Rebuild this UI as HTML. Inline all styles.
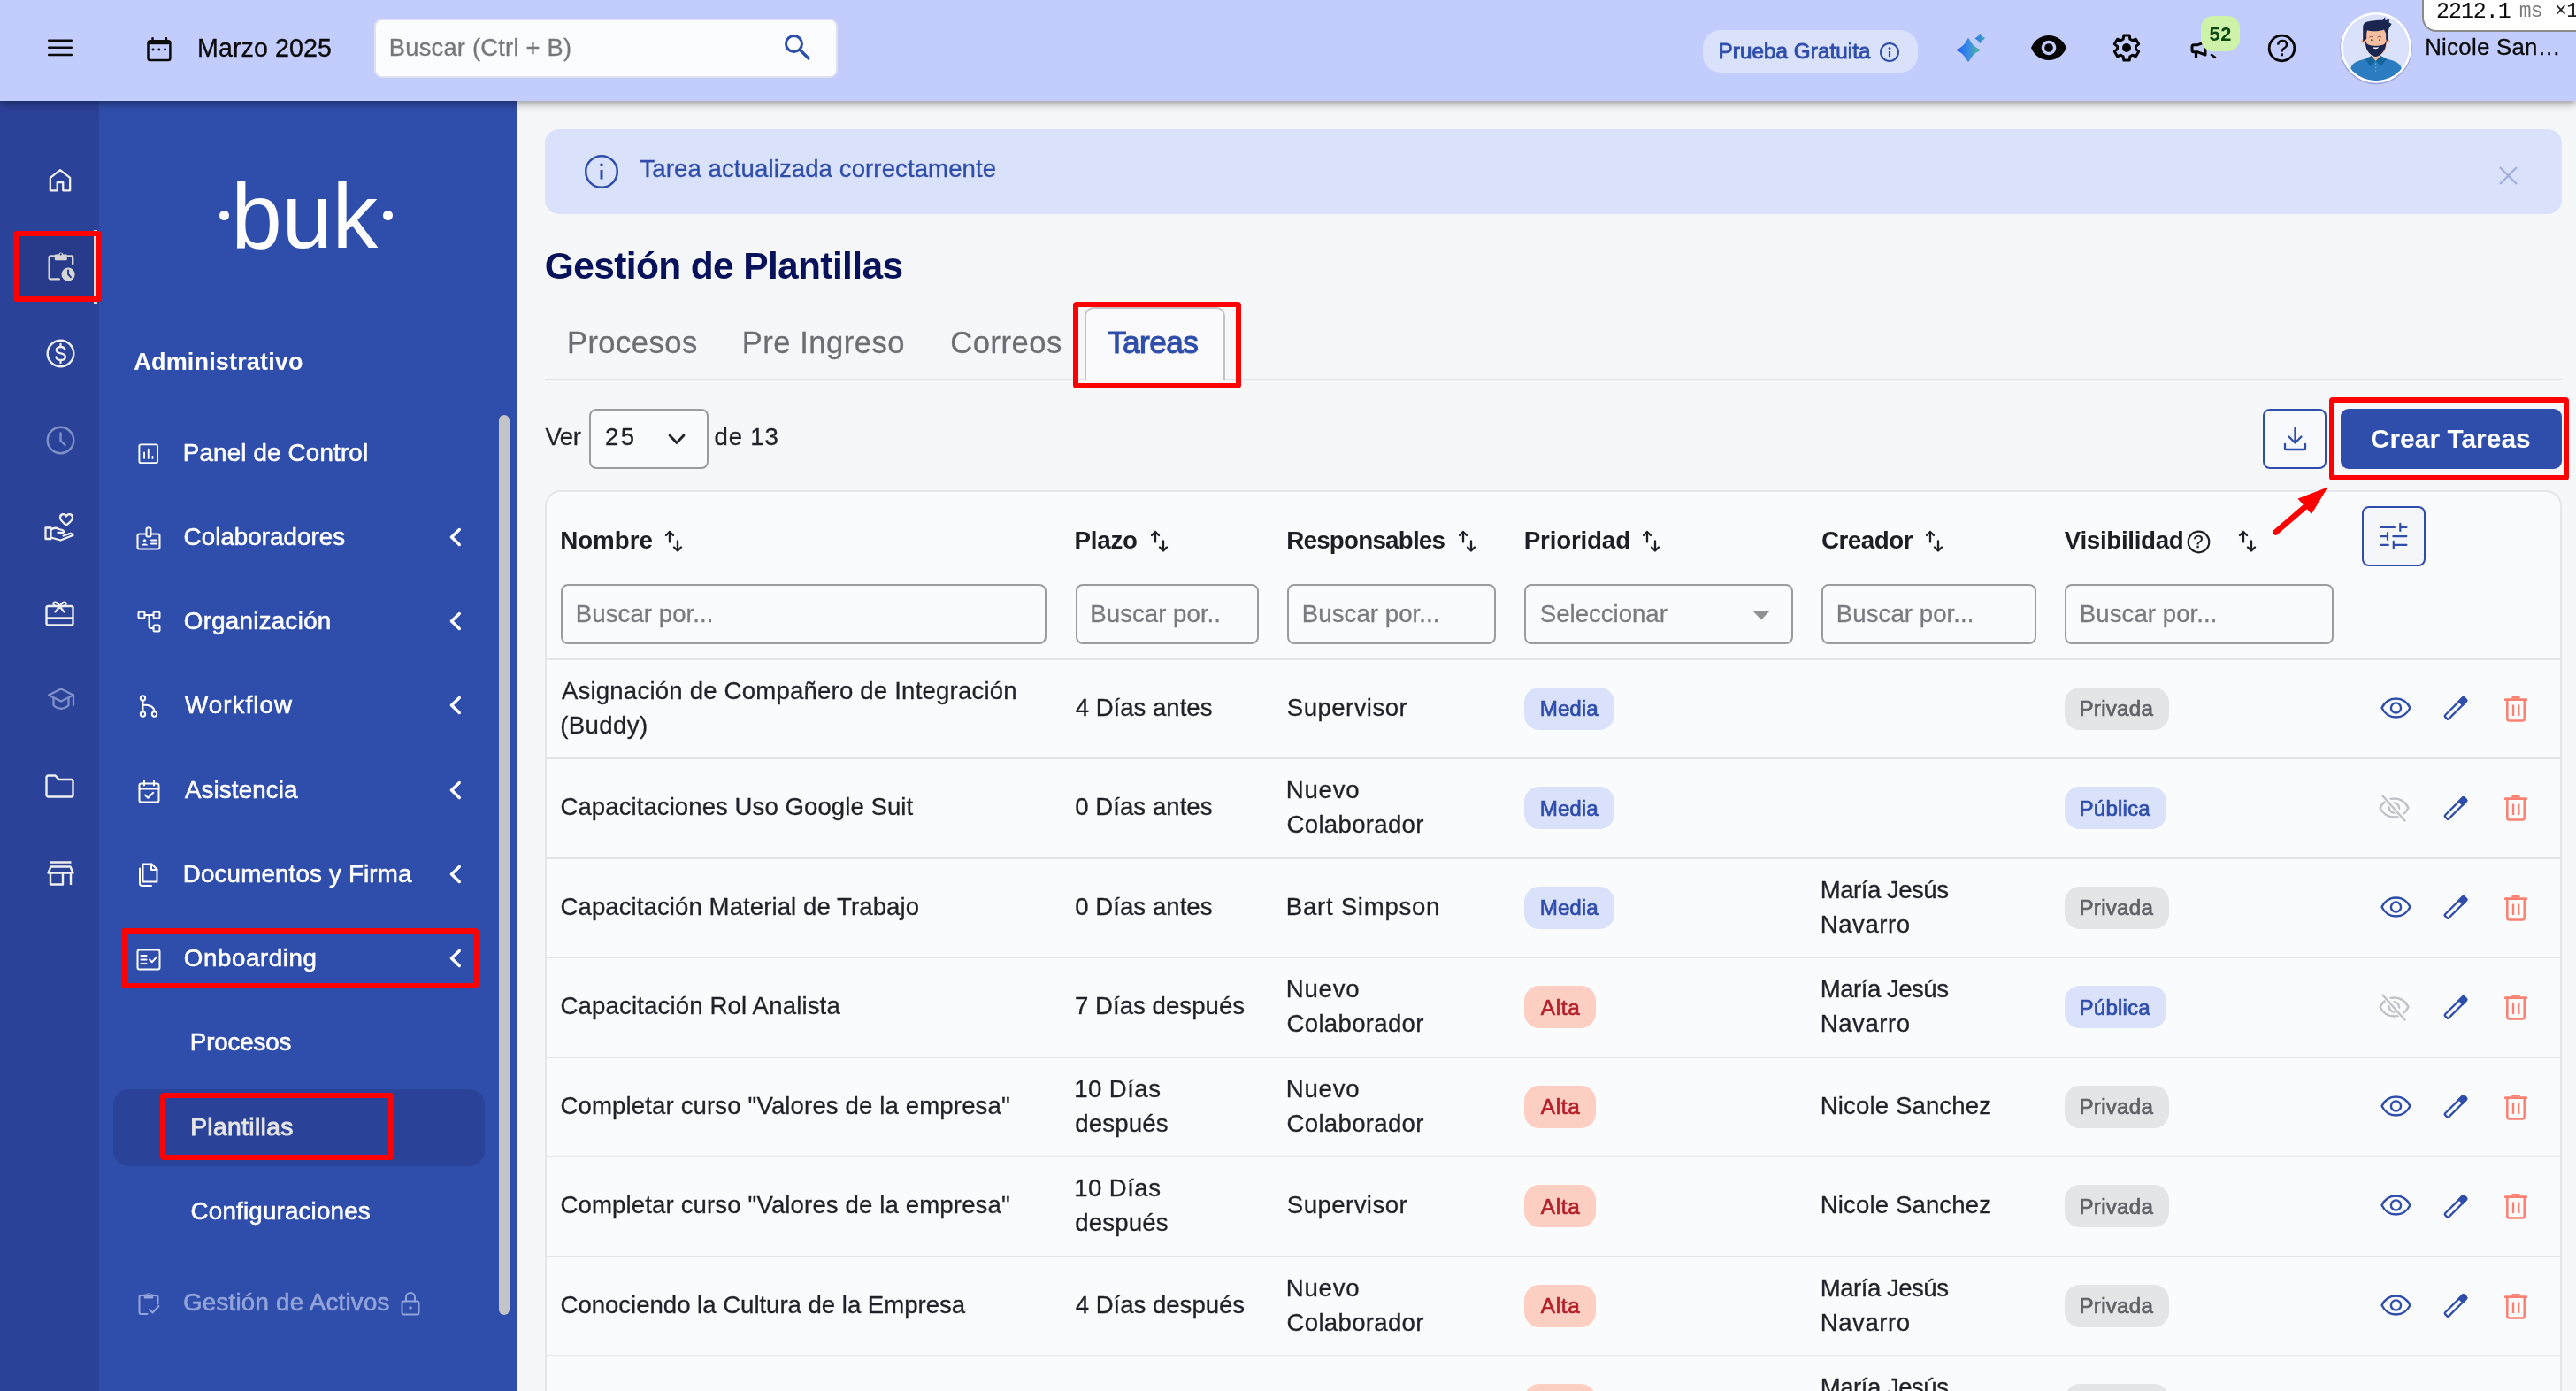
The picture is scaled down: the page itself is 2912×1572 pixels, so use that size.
<!DOCTYPE html>
<html lang="es"><head><meta charset="utf-8"><title>Gestión de Plantillas</title>
<style>
html,body{margin:0;padding:0}
body{width:2912px;height:1572px;overflow:hidden;position:relative;background:#f6f7f9;font-family:"Liberation Sans",sans-serif;}
#app{position:absolute;left:0;top:0;width:2912px;height:1572px;overflow:hidden;will-change:transform}
@media (width:1456px){body{width:1456px;height:786px}#app{transform:scale(.5);transform-origin:0 0}}
.t{position:absolute;white-space:nowrap;line-height:1em;margin:0;padding:0;font-weight:400}
.red{position:absolute;border:6px solid #fe0000;border-radius:4px;box-sizing:border-box}
.inp{position:absolute;box-sizing:border-box;border:2px solid #9a9c9f;border-radius:8px;background:#fafbfd}
.line{position:absolute;background:#e2e5ea;height:2px}
.bdg{position:absolute;border-radius:17px;box-sizing:border-box}
</style></head><body><div id="app">
<div style="position:absolute;left:0px;top:114px;width:112px;height:1458px;background:#2b4299;"></div>
<div style="position:absolute;left:112px;top:114px;width:472px;height:1458px;background:#2f4daa;"></div>
<div style="position:absolute;left:16px;top:262px;width:92px;height:78px;background:#283b8a;"></div>
<div style="position:absolute;left:106px;top:260px;width:3.5px;height:82.5px;background:#d9d9d9;"></div>
<div style="position:absolute;left:564px;top:469px;width:12px;height:1017px;background:#c3c4c8;border-radius:6px;"></div>
<div style="position:absolute;left:128px;top:1231px;width:420px;height:87px;background:#2b4299;border-radius:18px;"></div>
<div style="position:absolute;left:0px;top:0px;width:2912px;height:114px;background:#c3cdfd;box-shadow:0 3px 9px rgba(0,0,0,.40);"></div>
<svg style="position:absolute;left:50.0px;top:40.0px;" width="40.0" height="28.0" viewBox="50 40 40 28" fill="none"><path d="M55.200 45.700h25.600M55.200 53.800h25.600M55.200 61.900h25.600" stroke="#0b0b0b" stroke-width="2.500" stroke-linecap="round"/></svg>
<svg style="position:absolute;left:160.0px;top:38.0px;" width="40.0" height="36.0" viewBox="160 38 40 36" fill="none"><rect x="167.500" y="46.200" width="24.900" height="21.800" rx="2.300" stroke="#0b0b0b" stroke-width="2.500"/><path d="M167.500 49.100h24.900" stroke="#0b0b0b" stroke-width="2.200"/><path d="M172.500 43.300v2.500M187.900 43.300v2.500" stroke="#0b0b0b" stroke-width="2.500" stroke-linecap="round"/><circle cx="173" cy="56" r="1.450" fill="#0b0b0b"/><circle cx="179.800" cy="56" r="1.450" fill="#0b0b0b"/><circle cx="186.500" cy="56" r="1.450" fill="#0b0b0b"/></svg>
<span class="t" style="left:223.0px;top:40.1px;font-size:28.6px;color:#0b0b0b;-webkit-text-stroke:0.35px #0b0b0b;letter-spacing:0.11px;">Marzo 2025</span>
<div style="position:absolute;left:423px;top:20.5px;width:524px;height:67px;box-sizing:border-box;background:#fbfcfe;border:2px solid #dfe2ea;border-radius:9px;"></div>
<span class="t" style="left:439.8px;top:40.3px;font-size:27.3px;color:#75777b;-webkit-text-stroke:0.3px #75777b;letter-spacing:0.24px;">Buscar (Ctrl + B)</span>
<svg style="position:absolute;left:885.0px;top:37.0px;" width="32.0" height="32.0" viewBox="0 0 32 32" fill="none"><circle cx="12.5" cy="12.5" r="9" stroke="#2f4daa" stroke-width="3"/><path d="M19.5 19.5L29 29" stroke="#2f4daa" stroke-width="3.2" stroke-linecap="round"/></svg>
<div style="position:absolute;left:1925px;top:34px;width:243px;height:48px;background:#dae1fb;border-radius:20px;"></div>
<span class="t" style="left:1942.6px;top:45.7px;font-size:24.2px;color:#2f4daa;-webkit-text-stroke:0.9px #2f4daa;letter-spacing:0.08px;">Prueba Gratuita</span>
<svg style="position:absolute;left:2124.0px;top:46.5px;" width="24.0" height="24.0" viewBox="0 0 24 24" fill="none"><circle cx="12" cy="12" r="10" stroke="#2f4daa" stroke-width="2"/><path d="M12 11v6" stroke="#2f4daa" stroke-width="2.2"/><circle cx="12" cy="7.6" r="1.4" fill="#2f4daa"/></svg>
<svg style="position:absolute;left:2206.0px;top:30.0px;" width="44.0" height="44.0" viewBox="2206 30 44 44" fill="none"><defs><linearGradient id="sg" gradientUnits="userSpaceOnUse" x1="2212" y1="0" x2="2240" y2="0"><stop offset="0" stop-color="#1a64f7"/><stop offset="0.5" stop-color="#3a8ee2"/><stop offset="1" stop-color="#55bd84"/></linearGradient><linearGradient id="sg2" gradientUnits="userSpaceOnUse" x1="2232" y1="0" x2="2245" y2="0"><stop offset="0" stop-color="#2a78f0"/><stop offset="1" stop-color="#4aa9b0"/></linearGradient></defs><path d="M2225.10 44.30C2227.54 49.91 2231.69 54.06 2237.30 56.50C2231.69 58.94 2227.54 63.09 2225.10 68.70C2222.66 63.09 2218.51 58.94 2212.90 56.50C2218.51 54.06 2222.66 49.91 2225.10 44.30Z" fill="url(#sg)" stroke="url(#sg)" stroke-width="2" stroke-linejoin="round"/><path d="M2238.30 38.50C2239.28 40.75 2240.95 42.42 2243.20 43.40C2240.95 44.38 2239.28 46.05 2238.30 48.30C2237.32 46.05 2235.65 44.38 2233.40 43.40C2235.65 42.42 2237.32 40.75 2238.30 38.50Z" fill="url(#sg2)" stroke="url(#sg2)" stroke-width="1.200" stroke-linejoin="round"/></svg>
<svg style="position:absolute;left:2296.0px;top:40.0px;" width="40.0" height="28.0" viewBox="0 0 40 28" fill="none"><path d="M20 0C11 0 3.500 5.500 0 14c3.500 8.500 11 14 20 14s16.500-5.500 20-14C36.500 5.500 29 0 20 0z" fill="#050505"/><circle cx="20" cy="14" r="8.300" fill="#c3cdfd"/><circle cx="20" cy="14" r="4.800" fill="#050505"/></svg>
<svg style="position:absolute;left:2384.0px;top:34.0px;" width="40.0" height="40.0" viewBox="2384 34 40 40" fill="none"><path d="M2400.20 44.10L2400.78 40.07L2407.22 40.07L2407.80 44.10L2410.67 45.76L2414.46 44.25L2417.68 49.82L2414.47 52.34L2414.47 55.66L2417.68 58.18L2414.46 63.75L2410.67 62.24L2407.80 63.90L2407.22 67.93L2400.78 67.93L2400.20 63.90L2397.33 62.24L2393.54 63.75L2390.32 58.18L2393.53 55.66L2393.53 52.34L2390.32 49.82L2393.54 44.25L2397.33 45.76Z" stroke="#050505" stroke-width="3" stroke-linejoin="round"/><circle cx="2404" cy="54" r="5" fill="#050505"/></svg>
<svg style="position:absolute;left:2470.0px;top:40.0px;" width="40.0" height="30.0" viewBox="2470 40 40 30" fill="none"><path d="M2480 50.700h4.500l8.500-3.200v14.500l-8.500-3.200h-4.500a2 2 0 01-2-2v-4.100a2 2 0 012-2z" stroke="#050505" stroke-width="3" stroke-linejoin="round"/><path d="M2482.500 59v5.300" stroke="#050505" stroke-width="3.200" stroke-linecap="round"/><path d="M2500 62l4 2.800" stroke="#050505" stroke-width="2.600" stroke-linecap="round"/></svg>
<div style="position:absolute;left:2488px;top:18px;width:44px;height:40px;background:#cdf2a8;border-radius:14px;"></div>
<span class="t" style="left:2497.4px;top:27.5px;font-size:21.8px;color:#0b4a12;font-weight:700;letter-spacing:0.73px;">52</span>
<svg style="position:absolute;left:2563.0px;top:37.5px;" width="33.0" height="33.0" viewBox="0 0 33 33" fill="none"><circle cx="16.500" cy="16.500" r="14.300" stroke="#050505" stroke-width="2.800"/></svg>
<span class="t" style="left:2573.0px;top:41.7px;font-size:25.5px;color:#050505;-webkit-text-stroke:0.3px #050505;">?</span>
<svg style="position:absolute;left:2636.0px;top:4.0px;" width="100.0" height="100.0" viewBox="0 0 100 100" fill="none"><defs><clipPath id="avc"><circle cx="50" cy="49.800" r="37.400"/></clipPath></defs>
<circle cx="50" cy="50.600" r="40.800" fill="rgba(70,80,150,.30)"/>
<circle cx="50" cy="49.800" r="40" fill="#fff"/><circle cx="50" cy="49.800" r="37.400" fill="#dae1fa"/>
<g clip-path="url(#avc)">
<path d="M21 75C22 67.500 27 65.300 38.100 62.500L44.600 59.300 49.600 60.500 55.300 59.300 61.800 62.500C73 65.300 78 67.500 79.100 75L79 100H21z" fill="#2b7cc1"/>
<path d="M44.600 58L54.800 58 54.200 60.500 49.600 65.300 45.200 60.500z" fill="#f6b898"/>
<path d="M38.100 62.500L44.600 59.300 49.600 65.100 43.100 70.800zM61.800 62.500L55.300 59.300 49.600 65.100 55.700 70.800z" fill="#12649b"/>
<circle cx="49.600" cy="68.300" r=".700" fill="#c9a56a"/><circle cx="49.600" cy="72.500" r=".700" fill="#c9a56a"/><circle cx="49.600" cy="76" r=".700" fill="#c9a56a"/>
<circle cx="35.600" cy="42.400" r="2.400" fill="#f0ac8c"/><circle cx="63.200" cy="42.400" r="2.400" fill="#f0ac8c"/>
<path d="M38.800 28h22.700v20c0 7-5 11-11.300 11S38.800 55 38.800 48z" fill="#f8be9f"/>
<path d="M37.600 39.500C38 48 38.500 52 43.100 56.800 46 59.500 48 60 49.600 60s3.600-.500 6.500-3.200C60.700 52 61.400 48 61.900 39.500 61.200 43 60.500 45 58.800 46.300 56 47.500 53 47.800 49.600 47.800S43.500 47.500 40.800 46.300C39 45 38.300 43 37.600 39.500z" fill="#1a264f"/>
<path d="M46.200 49c2.200 .800 4.600 .800 6.800 0-.600 3-6.200 3-6.800 0z" fill="#fff"/>
<path d="M35.200 43.100V27C35.200 23 37.500 21 40.300 20.500 44 19.300 52 18.700 57.500 18.700L60 15.300 60.700 19.200 65 17.300 64.700 21.600 67.600 23 65 27.300C64 30 63.400 32.400 62.800 43.100L61.100 40V33.800L59 29.500C55 31.500 45 32 39.900 30.200L39.200 34V40z" fill="#1a264f"/>
<circle cx="44.900" cy="41.200" r=".900" fill="#2d5a66"/><circle cx="53.900" cy="41.200" r=".900" fill="#2d5a66"/>
<path d="M42.700 38c1.200-1 2.800-1 4 0M51.800 38c1.200-1 2.800-1 4 0" stroke="#3a2f3f" stroke-width=".700" stroke-linecap="round"/>
</g></svg>
<span class="t" style="left:2741.2px;top:41.4px;font-size:25.8px;color:#0b0b0b;-webkit-text-stroke:0.3px #0b0b0b;letter-spacing:0.28px;">Nicole San…</span>
<div style="position:absolute;left:2738px;top:-4px;width:190px;height:39.5px;box-sizing:border-box;background:#fff;border:2px solid #8b8b88;border-radius:0 0 0 16px;"></div>
<span class="t" style="left:2754.0px;top:0.5px;font-size:25px;color:#0d0d0d;letter-spacing:-1.05px;font-family:'Liberation Mono','DejaVu Sans Mono',monospace;">2212.1</span>
<span class="t" style="left:2847.7px;top:2.2px;font-size:23px;color:#7a7a7a;letter-spacing:-0.80px;font-family:'Liberation Mono','DejaVu Sans Mono',monospace;">ms</span>
<span class="t" style="left:2888.0px;top:2.2px;font-size:23px;color:#222;letter-spacing:-0.50px;font-family:'Liberation Mono','DejaVu Sans Mono',monospace;">×1</span>
<svg style="position:absolute;left:55.0px;top:189.8px;" width="26.0" height="27.5" viewBox="0 0 28 29" fill="none"><path d="M2 11.500L14 2l12 9.500V27h-8.500V17h-7v10H2z" stroke="#efefef" stroke-width="2.500" stroke-linejoin="round"/></svg>
<svg style="position:absolute;left:53.5px;top:283.5px;" width="32.0" height="34.0" viewBox="0 0 32 34" fill="none"><path d="M22.500 5.400h4.200a1.500 1.500 0 011.500 1.500v7M7.500 5.400H3.200a1.500 1.500 0 00-1.500 1.500v23a1.500 1.500 0 001.500 1.500h9.600" stroke="#d6d6d6" stroke-width="2.400" stroke-linecap="round"/><path d="M8.800 3.600h3.300a2.800 2.800 0 015.400 0h3.300a1 1 0 011 1v4.600a1 1 0 01-1 1H8.800a1 1 0 01-1-1V4.600a1 1 0 011-1z" fill="#d6d6d6"/><circle cx="14.800" cy="3.400" r="1.100" fill="#283b8a"/><circle cx="23.100" cy="26" r="7.600" fill="#d6d6d6"/><path d="M23.100 21.500V26l2.800 3.200" stroke="#283b8a" stroke-width="2" stroke-linecap="round"/></svg>
<svg style="position:absolute;left:51.5px;top:382.5px;" width="33.0" height="33.0" viewBox="0 0 33 33" fill="none"><circle cx="16.500" cy="16.500" r="14.800" stroke="#efefef" stroke-width="2.400"/><path d="M21.500 12.200c-.600-2-2.400-3.200-5-3.200-2.800 0-4.800 1.400-4.800 3.700 0 5 10.200 2.300 10.200 7.600 0 2.300-2.200 3.700-5.200 3.700-2.800 0-4.800-1.300-5.400-3.500M16.500 6v3M16.500 24v3" stroke="#efefef" stroke-width="2.300" stroke-linecap="round"/></svg>
<svg style="position:absolute;left:51.5px;top:480.5px;" width="33.0" height="33.0" viewBox="0 0 33 33" fill="none"><circle cx="16.500" cy="16.500" r="14.800" stroke="#8091c8" stroke-width="2.400"/><path d="M16.500 8.500v8.500l5 5" stroke="#8091c8" stroke-width="2.400" stroke-linecap="round"/></svg>
<svg style="position:absolute;left:50.1px;top:578.5px;" width="35.0" height="34.0" viewBox="0 0 35 34" fill="none"><path d="M1.500 17.500h6V30h-6z" stroke="#efefef" stroke-width="2.300" stroke-linejoin="round"/><path d="M7.500 19.500c3-2 6-2.500 9-.500l4 1c2 .500 2 3 0 3h-5M7.500 28.500l11 3 14-5.500c-1-2.500-3-2.500-5-1.500l-6 2" stroke="#efefef" stroke-width="2.300" stroke-linejoin="round" stroke-linecap="round"/><path d="M25 14.500c-4-3-7-5.500-7-8.500 0-4.500 5.500-5 7-1.500 1.500-3.500 7-3 7 1.500 0 3-3 5.500-7 8.500z" stroke="#efefef" stroke-width="2.300" stroke-linejoin="round"/></svg>
<svg style="position:absolute;left:51.3px;top:677.7px;" width="33.0" height="30.0" viewBox="0 0 33 30" fill="none"><rect x="1.500" y="7" width="30" height="21.500" rx="2" stroke="#efefef" stroke-width="2.400"/><path d="M1.500 20.500h30" stroke="#efefef" stroke-width="2.400"/><path d="M16.500 7.500c-3-6-8-6-7-2.500.700 2 4 2.500 7 2.500zM16.500 7.500c3-6 8-6 7-2.500-.700 2-4 2.500-7 2.500zM16.500 7.500l-5 6M16.500 7.500l5 6" stroke="#efefef" stroke-width="2.200" stroke-linejoin="round" stroke-linecap="round"/></svg>
<svg style="position:absolute;left:52.5px;top:776.0px;" width="33.0" height="28.0" viewBox="0 0 33 28" fill="none"><path d="M2 9.500L16 2.500l14 7-14 7z" stroke="#8091c8" stroke-width="2.300" stroke-linejoin="round"/><path d="M7.500 13v8c4.500 5 12.500 5 17 0v-8M30 9.500V21" stroke="#8091c8" stroke-width="2.300" stroke-linejoin="round" stroke-linecap="round"/></svg>
<svg style="position:absolute;left:51.3px;top:875.0px;" width="33.0" height="27.0" viewBox="0 0 33 27" fill="none"><path d="M1.500 3.500a2 2 0 012-2h8l4 4.500h14a2 2 0 012 2V23.500a2 2 0 01-2 2h-26a2 2 0 01-2-2z" stroke="#efefef" stroke-width="2.400" stroke-linejoin="round"/></svg>
<svg style="position:absolute;left:52.7px;top:972.7px;" width="31.0" height="28.0" viewBox="0 0 31 28" fill="none"><path d="M3.500 1.500h24" stroke="#efefef" stroke-width="2.500"/><path d="M4.500 6.500h22l3 7h-28z" stroke="#efefef" stroke-width="2.400" stroke-linejoin="round"/><path d="M4 13.500v13h14v-13M27 13.500v13.500" stroke="#efefef" stroke-width="2.400" stroke-linejoin="round"/></svg>
<div class="red" style="left:15px;top:261px;width:100px;height:80px"></div>
<div style="position:absolute;left:247.5px;top:238px;width:11px;height:11px;background:#fff;border-radius:50%;"></div>
<div style="position:absolute;left:433px;top:238px;width:11px;height:11px;background:#fff;border-radius:50%;"></div>
<span class="t" style="left:261.3px;top:193.4px;font-size:103.5px;color:#fff;letter-spacing:-0.45px;">buk</span>
<span class="t" style="left:151.3px;top:395.3px;font-size:27.1px;color:#fff;font-weight:700;letter-spacing:0.12px;">Administrativo</span>
<span class="t" style="left:206.8px;top:498.0px;font-size:27.7px;color:#fff;-webkit-text-stroke:0.6px #fff;letter-spacing:0.20px;">Panel de Control</span>
<span class="t" style="left:207.6px;top:593.0px;font-size:27.7px;color:#fff;-webkit-text-stroke:0.6px #fff;letter-spacing:0.08px;">Colaboradores</span>
<svg style="position:absolute;left:507.0px;top:595.9px;" width="15.0" height="22.0" viewBox="0 0 15 22" fill="none"><path d="M12.300 2.500L3.500 11 12.300 19.500" stroke="#fff" stroke-width="3.500" stroke-linecap="round" stroke-linejoin="round"/></svg>
<span class="t" style="left:207.8px;top:688.4px;font-size:27.7px;color:#fff;-webkit-text-stroke:0.6px #fff;letter-spacing:0.30px;">Organización</span>
<svg style="position:absolute;left:507.0px;top:691.3px;" width="15.0" height="22.0" viewBox="0 0 15 22" fill="none"><path d="M12.300 2.500L3.500 11 12.300 19.500" stroke="#fff" stroke-width="3.500" stroke-linecap="round" stroke-linejoin="round"/></svg>
<span class="t" style="left:208.9px;top:783.4px;font-size:27.7px;color:#fff;-webkit-text-stroke:0.6px #fff;letter-spacing:1.11px;">Workflow</span>
<svg style="position:absolute;left:507.0px;top:786.3px;" width="15.0" height="22.0" viewBox="0 0 15 22" fill="none"><path d="M12.300 2.500L3.500 11 12.300 19.500" stroke="#fff" stroke-width="3.500" stroke-linecap="round" stroke-linejoin="round"/></svg>
<span class="t" style="left:209.0px;top:878.8px;font-size:27.7px;color:#fff;-webkit-text-stroke:0.6px #fff;letter-spacing:0.13px;">Asistencia</span>
<svg style="position:absolute;left:507.0px;top:881.7px;" width="15.0" height="22.0" viewBox="0 0 15 22" fill="none"><path d="M12.300 2.500L3.500 11 12.300 19.500" stroke="#fff" stroke-width="3.500" stroke-linecap="round" stroke-linejoin="round"/></svg>
<span class="t" style="left:206.8px;top:974.0px;font-size:27.7px;color:#fff;-webkit-text-stroke:0.6px #fff;letter-spacing:0.19px;">Documentos y Firma</span>
<svg style="position:absolute;left:507.0px;top:976.9px;" width="15.0" height="22.0" viewBox="0 0 15 22" fill="none"><path d="M12.300 2.500L3.500 11 12.300 19.500" stroke="#fff" stroke-width="3.500" stroke-linecap="round" stroke-linejoin="round"/></svg>
<span class="t" style="left:207.8px;top:1069.0px;font-size:27.7px;color:#fff;-webkit-text-stroke:0.6px #fff;letter-spacing:0.61px;">Onboarding</span>
<svg style="position:absolute;left:507.0px;top:1071.9px;" width="15.0" height="22.0" viewBox="0 0 15 22" fill="none"><path d="M12.300 2.500L3.500 11 12.300 19.500" stroke="#fff" stroke-width="3.500" stroke-linecap="round" stroke-linejoin="round"/></svg>
<span class="t" style="left:214.8px;top:1164.3px;font-size:27.7px;color:#fff;-webkit-text-stroke:0.6px #fff;letter-spacing:-0.13px;">Procesos</span>
<span class="t" style="left:215.2px;top:1258.7px;font-size:28.2px;color:#e6e6e6;-webkit-text-stroke:0.9px #e6e6e6;letter-spacing:0.37px;">Plantillas</span>
<span class="t" style="left:215.6px;top:1354.6px;font-size:27.7px;color:#fff;-webkit-text-stroke:0.6px #fff;letter-spacing:0.21px;">Configuraciones</span>
<span class="t" style="left:207.0px;top:1457.6px;font-size:27.7px;color:#93a4d9;-webkit-text-stroke:0.6px #93a4d9;letter-spacing:0.24px;">Gestión de Activos</span>
<svg style="position:absolute;left:156.2px;top:501.0px;" width="23.5" height="23.5" viewBox="0 0 25 25" fill="none"><rect x="1.500" y="1.500" width="22" height="22" rx="2" stroke="#fff" stroke-width="2" stroke-linejoin="round" stroke-linecap="round"/><path d="M7.500 18v-7M12.500 18V7M17.500 18v-2" stroke="#fff" stroke-width="2" stroke-linejoin="round" stroke-linecap="round"/></svg>
<svg style="position:absolute;left:154.0px;top:594.7px;" width="28.0" height="27.0" viewBox="0 0 28 27" fill="none"><rect x="1.500" y="8.500" width="25" height="17" rx="2" stroke="#fff" stroke-width="2" stroke-linejoin="round" stroke-linecap="round"/><rect x="11.500" y="1.500" width="5" height="10" rx="1.500" stroke="#fff" stroke-width="2" stroke-linejoin="round" stroke-linecap="round" fill="#2f4daa"/><circle cx="9.500" cy="16" r="1.800" fill="#fff"/><path d="M6 21.500c.600-2.600 6.400-2.600 7 0z" fill="#fff"/><path d="M17 15.500h5.500M17 19.500h5.500" stroke="#fff" stroke-width="2" stroke-linejoin="round" stroke-linecap="round"/></svg>
<svg style="position:absolute;left:154.5px;top:690.0px;" width="27.0" height="25.0" viewBox="0 0 27 25" fill="none"><rect x="1.500" y="1.500" width="7" height="7" rx="1.500" stroke="#fff" stroke-width="2" stroke-linejoin="round" stroke-linecap="round"/><rect x="18.500" y="1.500" width="7" height="7" rx="1.500" stroke="#fff" stroke-width="2" stroke-linejoin="round" stroke-linecap="round"/><rect x="18.500" y="16.500" width="7" height="7" rx="1.500" stroke="#fff" stroke-width="2" stroke-linejoin="round" stroke-linecap="round"/><path d="M8.500 5h10M13.500 5v12.500a2.500 2.500 0 002.500 2.500h2.500" stroke="#fff" stroke-width="2" stroke-linejoin="round" stroke-linecap="round"/></svg>
<svg style="position:absolute;left:157.0px;top:785.0px;" width="22.0" height="26.0" viewBox="0 0 22 26" fill="none"><circle cx="4.500" cy="4" r="2.700" stroke="#fff" stroke-width="2" stroke-linejoin="round" stroke-linecap="round"/><circle cx="4.500" cy="22" r="2.700" stroke="#fff" stroke-width="2" stroke-linejoin="round" stroke-linecap="round"/><circle cx="17.500" cy="22" r="2.700" stroke="#fff" stroke-width="2" stroke-linejoin="round" stroke-linecap="round"/><path d="M4.500 6.700v12.600M4.500 11.500c8 0 13 2 13 7.800" stroke="#fff" stroke-width="2" stroke-linejoin="round" stroke-linecap="round"/></svg>
<svg style="position:absolute;left:155.5px;top:880.5px;" width="25.0" height="27.0" viewBox="0 0 25 27" fill="none"><rect x="1.500" y="4.500" width="22" height="21" rx="2" stroke="#fff" stroke-width="2" stroke-linejoin="round" stroke-linecap="round"/><path d="M1.500 10.500h22M7 1.500v5M18 1.500v5M8 17.500l3.200 3.200 6-6" stroke="#fff" stroke-width="2" stroke-linejoin="round" stroke-linecap="round"/></svg>
<svg style="position:absolute;left:154.0px;top:975.0px;" width="25.0" height="28.0" viewBox="0 0 25 28" fill="none"><path d="M7.500 1.500h10l6 6V21.500h-16z" stroke="#fff" stroke-width="2" stroke-linejoin="round" stroke-linecap="round"/><path d="M17 1.500V8h6.500M4 6.500v17a2.500 2.500 0 002.500 2.500H17" stroke="#fff" stroke-width="2" stroke-linejoin="round" stroke-linecap="round"/></svg>
<svg style="position:absolute;left:154.0px;top:1071.5px;" width="28.0" height="25.0" viewBox="0 0 28 25" fill="none"><rect x="1.500" y="1.500" width="25" height="22" rx="2" stroke="#fff" stroke-width="2" stroke-linejoin="round" stroke-linecap="round"/><path d="M5.500 8h6M5.500 12.500h6M5.500 17h6M15 12.500l2.800 2.800 5-5.500" stroke="#fff" stroke-width="2" stroke-linejoin="round" stroke-linecap="round"/></svg>
<svg style="position:absolute;left:155.0px;top:1458.5px;" width="26.0" height="28.0" viewBox="0 0 26 28" fill="none"><path d="M8 5H4.500a2 2 0 00-2 2v17a2 2 0 002 2h7M18 5h3.500a2 2 0 012 2v7.500" stroke="#93a4d9" stroke-width="2" stroke-linejoin="round" stroke-linecap="round"/><path d="M8.600 3.400h2.600a1.900 1.900 0 013.600 0h2.600a.800 .800 0 01.800 .800v3.600a.800 .800 0 01-.800 .800H8.600a.800 .800 0 01-.800-.800V4.200a.800 .800 0 01.800-.800z" fill="#93a4d9"/><circle cx="13" cy="3.200" r=".800" fill="#2f4daa"/><path d="M14 21l3.500 3.500 7-7.500" stroke="#93a4d9" stroke-width="2" stroke-linejoin="round" stroke-linecap="round"/></svg>
<svg style="position:absolute;left:452.5px;top:1459.5px;" width="22.0" height="27.0" viewBox="0 0 22 27" fill="none"><rect x="1.500" y="10.500" width="19" height="15" rx="2" stroke="#93a4d9" stroke-width="2" stroke-linejoin="round" stroke-linecap="round"/><path d="M6 10.500V6a5 5 0 0110 0v4.500" stroke="#93a4d9" stroke-width="2" stroke-linejoin="round" stroke-linecap="round"/><circle cx="11" cy="18" r="1.800" fill="#93a4d9"/></svg>
<div class="red" style="left:137px;top:1049px;width:404px;height:68px"></div>
<div class="red" style="left:181px;top:1235px;width:264px;height:76px"></div>
<div style="position:absolute;left:616px;top:146px;width:2280px;height:96px;background:#dae1fa;border-radius:16px;"></div>
<svg style="position:absolute;left:660.0px;top:174.0px;" width="40.0" height="40.0" viewBox="0 0 40 40" fill="none"><circle cx="20" cy="20" r="17.800" stroke="#2f4daa" stroke-width="2.500"/><path d="M20 18v10.500" stroke="#2f4daa" stroke-width="3"/><circle cx="20" cy="12.300" r="1.900" fill="#2f4daa"/></svg>
<span class="t" style="left:723.4px;top:177.4px;font-size:27.6px;color:#2f4daa;-webkit-text-stroke:0.3px #2f4daa;letter-spacing:0.08px;">Tarea actualizada correctamente</span>
<svg style="position:absolute;left:2824.0px;top:187.0px;" width="23.0" height="23.0" viewBox="0 0 23 23" fill="none"><path d="M2 2l19 19M21 2L2 21" stroke="#9fadde" stroke-width="2.200"/></svg>
<span class="t" style="left:615.8px;top:280.4px;font-size:42.5px;color:#07125a;font-weight:700;letter-spacing:-0.64px;">Gestión de Plantillas</span>
<div style="position:absolute;left:616px;top:428px;width:2280px;height:2px;background:#dde0e7;"></div>
<span class="t" style="left:640.9px;top:369.7px;font-size:34.6px;color:#6b6e73;-webkit-text-stroke:0.3px #6b6e73;letter-spacing:0.45px;">Procesos</span>
<span class="t" style="left:838.8px;top:369.7px;font-size:34.6px;color:#6b6e73;-webkit-text-stroke:0.3px #6b6e73;letter-spacing:0.49px;">Pre Ingreso</span>
<span class="t" style="left:1074.3px;top:369.7px;font-size:34.6px;color:#6b6e73;-webkit-text-stroke:0.3px #6b6e73;letter-spacing:0.49px;">Correos</span>
<div style="position:absolute;left:1226px;top:347px;width:159px;height:83px;box-sizing:border-box;border:2px solid #c2c2c4;border-bottom:none;border-radius:10px 10px 0 0;background:#fafafc;"></div>
<span class="t" style="left:1251.8px;top:368.8px;font-size:35.2px;color:#2f4daa;-webkit-text-stroke:1.1px #2f4daa;letter-spacing:-0.51px;">Tareas</span>
<div class="red" style="left:1213px;top:341px;width:190px;height:98px"></div>
<span class="t" style="left:616.4px;top:479.6px;font-size:27.6px;color:#1f2329;-webkit-text-stroke:0.3px #1f2329;letter-spacing:-0.46px;">Ver</span>
<div class="inp" style="left:666px;top:462px;width:134.500px;height:68px;border-color:#9b9c9e"></div>
<span class="t" style="left:684.0px;top:479.6px;font-size:27.6px;color:#1f2329;-webkit-text-stroke:0.3px #1f2329;letter-spacing:2.45px;">25</span>
<svg style="position:absolute;left:755.0px;top:490.0px;" width="20.0" height="13.0" viewBox="0 0 20 13" fill="none"><path d="M2 2l8 8.500L18 2" stroke="#1f2329" stroke-width="2.800" stroke-linecap="round" stroke-linejoin="round"/></svg>
<span class="t" style="left:807.5px;top:479.6px;font-size:27.6px;color:#1f2329;-webkit-text-stroke:0.3px #1f2329;letter-spacing:0.80px;">de 13</span>
<div class="inp" style="left:2558px;top:462px;width:72px;height:68px;border-color:#2f4daa;background:#f8f9fc"></div>
<svg style="position:absolute;left:2581.0px;top:482.0px;" width="27.0" height="28.0" viewBox="0 0 27 28" fill="none"><path d="M13.500 2v16M6.500 11.500l7 7 7-7M2 20v4.500a1.500 1.500 0 001.500 1.500h20a1.500 1.500 0 001.500-1.500V20" stroke="#2f4daa" stroke-width="2.300" stroke-linecap="round" stroke-linejoin="round"/></svg>
<div style="position:absolute;left:2646px;top:462px;width:250px;height:68px;background:#2f4daa;border-radius:9px;"></div>
<span class="t" style="left:2679.8px;top:480.5px;font-size:29.9px;color:#fff;font-weight:700;letter-spacing:0.03px;">Crear Tareas</span>
<div class="red" style="left:2633px;top:449px;width:270.500px;height:94px"></div>
<div style="position:absolute;left:616px;top:554px;width:2280px;height:1100px;box-sizing:border-box;background:#fafbfd;border:2px solid #e4e6eb;border-radius:18px;"></div>
<span class="t" style="left:633.2px;top:596.7px;font-size:27.8px;color:#1c1f26;font-weight:700;letter-spacing:-0.07px;">Nombre</span>
<svg style="position:absolute;left:751.0px;top:599.0px;" width="21.0" height="26.0" viewBox="0 0 21 26" fill="none"><path d="M6 13.500V2M2 6l4-4 4 4M15 12.500v11M11 19.500l4 4 4-4" stroke="#1c1f26" stroke-width="2.300" stroke-linecap="round" stroke-linejoin="round"/></svg>
<span class="t" style="left:1214.5px;top:596.7px;font-size:27.8px;color:#1c1f26;font-weight:700;letter-spacing:-0.28px;">Plazo</span>
<svg style="position:absolute;left:1299.5px;top:599.0px;" width="21.0" height="26.0" viewBox="0 0 21 26" fill="none"><path d="M6 13.500V2M2 6l4-4 4 4M15 12.500v11M11 19.500l4 4 4-4" stroke="#1c1f26" stroke-width="2.300" stroke-linecap="round" stroke-linejoin="round"/></svg>
<span class="t" style="left:1454.2px;top:596.7px;font-size:27.8px;color:#1c1f26;font-weight:700;letter-spacing:-0.79px;">Responsables</span>
<svg style="position:absolute;left:1647.5px;top:599.0px;" width="21.0" height="26.0" viewBox="0 0 21 26" fill="none"><path d="M6 13.500V2M2 6l4-4 4 4M15 12.500v11M11 19.500l4 4 4-4" stroke="#1c1f26" stroke-width="2.300" stroke-linecap="round" stroke-linejoin="round"/></svg>
<span class="t" style="left:1722.7px;top:596.7px;font-size:27.8px;color:#1c1f26;font-weight:700;letter-spacing:-0.20px;">Prioridad</span>
<svg style="position:absolute;left:1855.5px;top:599.0px;" width="21.0" height="26.0" viewBox="0 0 21 26" fill="none"><path d="M6 13.500V2M2 6l4-4 4 4M15 12.500v11M11 19.500l4 4 4-4" stroke="#1c1f26" stroke-width="2.300" stroke-linecap="round" stroke-linejoin="round"/></svg>
<span class="t" style="left:2058.9px;top:596.7px;font-size:27.8px;color:#1c1f26;font-weight:700;letter-spacing:-0.49px;">Creador</span>
<svg style="position:absolute;left:2176.0px;top:599.0px;" width="21.0" height="26.0" viewBox="0 0 21 26" fill="none"><path d="M6 13.500V2M2 6l4-4 4 4M15 12.500v11M11 19.500l4 4 4-4" stroke="#1c1f26" stroke-width="2.300" stroke-linecap="round" stroke-linejoin="round"/></svg>
<span class="t" style="left:2333.7px;top:596.7px;font-size:27.8px;color:#1c1f26;font-weight:700;letter-spacing:-0.34px;">Visibilidad</span>
<svg style="position:absolute;left:2530.0px;top:599.0px;" width="21.0" height="26.0" viewBox="0 0 21 26" fill="none"><path d="M6 13.500V2M2 6l4-4 4 4M15 12.500v11M11 19.500l4 4 4-4" stroke="#1c1f26" stroke-width="2.300" stroke-linecap="round" stroke-linejoin="round"/></svg>
<svg style="position:absolute;left:2471.5px;top:598.5px;" width="27.0" height="27.0" viewBox="0 0 27 27" fill="none"><circle cx="13.500" cy="13.500" r="11.800" stroke="#1c1f26" stroke-width="2.200"/></svg>
<span class="t" style="left:2479.3px;top:601.9px;font-size:20.5px;color:#1c1f26;-webkit-text-stroke:0.3px #1c1f26;">?</span>
<div class="inp" style="left:2670px;top:572px;width:72px;height:67.500px;border-color:#2f4daa;background:#f5f6f9"></div>
<svg style="position:absolute;left:2686.0px;top:586.0px;" width="40.0" height="40.0" viewBox="2686 586 40 40" fill="none"><path d="M2691.600 595.900h15.300M2713.300 595.900h7.100M2713.300 591.900v8M2691.600 606.100h7.400M2699 602.100v8M2705.300 606.100h15.100M2691.600 615.900h8.200M2705.800 615.900h14.600M2705.800 611.900v8" stroke="#2f4daa" stroke-width="2.200" stroke-linecap="round"/></svg>
<div class="inp" style="left:634px;top:660px;width:548.5px;height:67.500px"></div>
<span class="t" style="left:650.8px;top:680.1px;font-size:27.6px;color:#787b80;-webkit-text-stroke:0.3px #787b80;letter-spacing:0.06px;">Buscar por...</span>
<div class="inp" style="left:1215.5px;top:660px;width:207px;height:67.500px"></div>
<span class="t" style="left:1232.3px;top:680.1px;font-size:27.6px;color:#787b80;-webkit-text-stroke:0.3px #787b80;letter-spacing:0.04px;">Buscar por..</span>
<div class="inp" style="left:1455px;top:660px;width:235.5px;height:67.500px"></div>
<span class="t" style="left:1471.8px;top:680.1px;font-size:27.6px;color:#787b80;-webkit-text-stroke:0.3px #787b80;letter-spacing:0.06px;">Buscar por...</span>
<div class="inp" style="left:1723px;top:660px;width:303.5px;height:67.500px"></div>
<span class="t" style="left:1740.8px;top:680.1px;font-size:27.6px;color:#787b80;-webkit-text-stroke:0.3px #787b80;letter-spacing:-0.01px;">Seleccionar</span>
<svg style="position:absolute;left:1981.0px;top:690.0px;" width="20.0" height="10.5" viewBox="0 0 20 10.500" fill="none"><path d="M0 0h20L10 10.500z" fill="#8f9194"/></svg>
<div class="inp" style="left:2059px;top:660px;width:242.5px;height:67.500px"></div>
<span class="t" style="left:2075.8px;top:680.1px;font-size:27.6px;color:#787b80;-webkit-text-stroke:0.3px #787b80;letter-spacing:0.06px;">Buscar por...</span>
<div class="inp" style="left:2334px;top:660px;width:303.5px;height:67.500px"></div>
<span class="t" style="left:2350.8px;top:680.1px;font-size:27.6px;color:#787b80;-webkit-text-stroke:0.3px #787b80;letter-spacing:0.06px;">Buscar por...</span>
<div class="line" style="left:618px;top:743.5px;width:2276px"></div>
<span class="t" style="left:634.9px;top:766.9px;font-size:27.6px;color:#1f2329;-webkit-text-stroke:0.3px #1f2329;letter-spacing:0.19px;">Asignación de Compañero de Integración</span>
<span class="t" style="left:633.2px;top:805.6px;font-size:27.6px;color:#1f2329;-webkit-text-stroke:0.3px #1f2329;letter-spacing:0.41px;">(Buddy)</span>
<span class="t" style="left:1215.7px;top:785.8px;font-size:27.6px;color:#1f2329;-webkit-text-stroke:0.3px #1f2329;letter-spacing:-0.01px;">4 Días antes</span>
<span class="t" style="left:1454.8px;top:785.8px;font-size:27.6px;color:#1f2329;-webkit-text-stroke:0.3px #1f2329;letter-spacing:0.44px;">Supervisor</span>
<div class="bdg" style="left:1723.4px;top:776.9px;width:101.8px;height:48px;background:#dae1fa"></div>
<span class="t" style="left:1740.8px;top:789.0px;font-size:24.2px;color:#2f4daa;-webkit-text-stroke:0.7px #2f4daa;letter-spacing:-0.02px;">Media</span>
<div class="bdg" style="left:2334px;top:776.9px;width:117.6px;height:48px;background:#e4e5e7"></div>
<span class="t" style="left:2350.5px;top:789.0px;font-size:24.2px;color:#5f6267;-webkit-text-stroke:0.7px #5f6267;letter-spacing:0.24px;">Privada</span>
<svg style="position:absolute;left:2690.5px;top:787.9px;overflow:visible;" width="35.0" height="24.0" viewBox="0 0 35 24" fill="none"><path d="M1.500 12C5 5 11 1.500 17.500 1.500S30 5 33.500 12C30 19 24 22.500 17.500 22.500S5 19 1.500 12z" stroke="#2f4daa" stroke-width="2.400" stroke-linejoin="round"/><circle cx="17.500" cy="12" r="5.600" stroke="#2f4daa" stroke-width="2.400"/></svg>
<svg style="position:absolute;left:2760.0px;top:785.4px;" width="32.0" height="31.0" viewBox="0 0 32 31" fill="none"><g transform="rotate(-45 16 15.500)"><rect x="0.800" y="12.600" width="30.400" height="5.800" rx="1.300" stroke="#2f4daa" stroke-width="2.300"/><path d="M24.500 12.600h5.400a1.300 1.300 0 011.300 1.300v3.200a1.300 1.300 0 01-1.300 1.300h-5.400z" fill="#2f4daa" stroke="#2f4daa" stroke-width="2.300"/></g></svg>
<svg style="position:absolute;left:2830.5px;top:785.6px;" width="26.0" height="30.0" viewBox="0 0 26 30" fill="none"><path d="M1.200 4.600h23.600" stroke="#fa8072" stroke-width="2.800" stroke-linecap="round"/><path d="M9.500 3.500V2.200h7v1.300" stroke="#fa8072" stroke-width="2.400" stroke-linejoin="round"/><path d="M3.300 5.500v20.700a2.300 2.300 0 002.300 2.300h14.800a2.300 2.300 0 002.300-2.300V5.500" stroke="#fa8072" stroke-width="2.500"/><path d="M10 10.500v12.500M16.200 10.500v12.500" stroke="#fa8072" stroke-width="2.400"/></svg>
<div class="line" style="left:618px;top:856.0px;width:2276px"></div>
<span class="t" style="left:633.5px;top:898.3px;font-size:27.6px;color:#1f2329;-webkit-text-stroke:0.3px #1f2329;letter-spacing:0.05px;">Capacitaciones Uso Google Suit</span>
<span class="t" style="left:1215.2px;top:898.3px;font-size:27.6px;color:#1f2329;-webkit-text-stroke:0.3px #1f2329;letter-spacing:0.04px;">0 Días antes</span>
<span class="t" style="left:1453.8px;top:879.4px;font-size:27.6px;color:#1f2329;-webkit-text-stroke:0.3px #1f2329;letter-spacing:0.77px;">Nuevo</span>
<span class="t" style="left:1454.6px;top:918.1px;font-size:27.6px;color:#1f2329;-webkit-text-stroke:0.3px #1f2329;letter-spacing:0.29px;">Colaborador</span>
<div class="bdg" style="left:1723.4px;top:889.4px;width:101.8px;height:48px;background:#dae1fa"></div>
<span class="t" style="left:1740.8px;top:901.5px;font-size:24.2px;color:#2f4daa;-webkit-text-stroke:0.7px #2f4daa;letter-spacing:-0.02px;">Media</span>
<div class="bdg" style="left:2334px;top:889.4px;width:114.8px;height:48px;background:#dae1fa"></div>
<span class="t" style="left:2350.5px;top:901.5px;font-size:24.2px;color:#2f4daa;-webkit-text-stroke:0.7px #2f4daa;letter-spacing:0.15px;">Pública</span>
<svg style="position:absolute;left:2689.0px;top:901.2px;overflow:visible;" width="35.0" height="24.0" viewBox="0 0 35 24" fill="none"><path d="M1.500 12C5 5 11 1.500 17.500 1.500S30 5 33.500 12C30 19 24 22.500 17.500 22.500S5 19 1.500 12z" stroke="#bfc2c8" stroke-width="2.400" stroke-linejoin="round"/><circle cx="17.500" cy="12" r="5.600" stroke="#bfc2c8" stroke-width="2.400"/><path d="M5 -2L30 26" stroke="#fafbfd" stroke-width="6"/><path d="M4.500 -1.500L29.500 26.500" stroke="#bfc2c8" stroke-width="2.400" stroke-linecap="round"/></svg>
<svg style="position:absolute;left:2760.0px;top:897.9px;" width="32.0" height="31.0" viewBox="0 0 32 31" fill="none"><g transform="rotate(-45 16 15.500)"><rect x="0.800" y="12.600" width="30.400" height="5.800" rx="1.300" stroke="#2f4daa" stroke-width="2.300"/><path d="M24.500 12.600h5.400a1.300 1.300 0 011.300 1.300v3.200a1.300 1.300 0 01-1.300 1.300h-5.400z" fill="#2f4daa" stroke="#2f4daa" stroke-width="2.300"/></g></svg>
<svg style="position:absolute;left:2830.5px;top:898.1px;" width="26.0" height="30.0" viewBox="0 0 26 30" fill="none"><path d="M1.200 4.600h23.600" stroke="#fa8072" stroke-width="2.800" stroke-linecap="round"/><path d="M9.500 3.500V2.200h7v1.300" stroke="#fa8072" stroke-width="2.400" stroke-linejoin="round"/><path d="M3.300 5.500v20.700a2.300 2.300 0 002.300 2.300h14.800a2.300 2.300 0 002.300-2.300V5.500" stroke="#fa8072" stroke-width="2.500"/><path d="M10 10.500v12.500M16.200 10.500v12.500" stroke="#fa8072" stroke-width="2.400"/></svg>
<div class="line" style="left:618px;top:968.5px;width:2276px"></div>
<span class="t" style="left:633.5px;top:1010.8px;font-size:27.6px;color:#1f2329;-webkit-text-stroke:0.3px #1f2329;letter-spacing:0.07px;">Capacitación Material de Trabajo</span>
<span class="t" style="left:1215.2px;top:1010.8px;font-size:27.6px;color:#1f2329;-webkit-text-stroke:0.3px #1f2329;letter-spacing:0.04px;">0 Días antes</span>
<span class="t" style="left:1453.8px;top:1010.8px;font-size:27.6px;color:#1f2329;-webkit-text-stroke:0.3px #1f2329;letter-spacing:0.73px;">Bart Simpson</span>
<span class="t" style="left:2057.8px;top:991.9px;font-size:27.6px;color:#1f2329;-webkit-text-stroke:0.3px #1f2329;letter-spacing:-0.51px;">María Jesús</span>
<span class="t" style="left:2057.8px;top:1030.6px;font-size:27.6px;color:#1f2329;-webkit-text-stroke:0.3px #1f2329;letter-spacing:0.52px;">Navarro</span>
<div class="bdg" style="left:1723.4px;top:1001.9px;width:101.8px;height:48px;background:#dae1fa"></div>
<span class="t" style="left:1740.8px;top:1014.0px;font-size:24.2px;color:#2f4daa;-webkit-text-stroke:0.7px #2f4daa;letter-spacing:-0.02px;">Media</span>
<div class="bdg" style="left:2334px;top:1001.9px;width:117.6px;height:48px;background:#e4e5e7"></div>
<span class="t" style="left:2350.5px;top:1014.0px;font-size:24.2px;color:#5f6267;-webkit-text-stroke:0.7px #5f6267;letter-spacing:0.24px;">Privada</span>
<svg style="position:absolute;left:2690.5px;top:1012.9px;overflow:visible;" width="35.0" height="24.0" viewBox="0 0 35 24" fill="none"><path d="M1.500 12C5 5 11 1.500 17.500 1.500S30 5 33.500 12C30 19 24 22.500 17.500 22.500S5 19 1.500 12z" stroke="#2f4daa" stroke-width="2.400" stroke-linejoin="round"/><circle cx="17.500" cy="12" r="5.600" stroke="#2f4daa" stroke-width="2.400"/></svg>
<svg style="position:absolute;left:2760.0px;top:1010.4px;" width="32.0" height="31.0" viewBox="0 0 32 31" fill="none"><g transform="rotate(-45 16 15.500)"><rect x="0.800" y="12.600" width="30.400" height="5.800" rx="1.300" stroke="#2f4daa" stroke-width="2.300"/><path d="M24.500 12.600h5.400a1.300 1.300 0 011.300 1.300v3.200a1.300 1.300 0 01-1.300 1.300h-5.400z" fill="#2f4daa" stroke="#2f4daa" stroke-width="2.300"/></g></svg>
<svg style="position:absolute;left:2830.5px;top:1010.6px;" width="26.0" height="30.0" viewBox="0 0 26 30" fill="none"><path d="M1.200 4.600h23.600" stroke="#fa8072" stroke-width="2.800" stroke-linecap="round"/><path d="M9.500 3.500V2.200h7v1.300" stroke="#fa8072" stroke-width="2.400" stroke-linejoin="round"/><path d="M3.300 5.500v20.700a2.300 2.300 0 002.300 2.300h14.800a2.300 2.300 0 002.300-2.300V5.500" stroke="#fa8072" stroke-width="2.500"/><path d="M10 10.500v12.500M16.200 10.500v12.500" stroke="#fa8072" stroke-width="2.400"/></svg>
<div class="line" style="left:618px;top:1081.0px;width:2276px"></div>
<span class="t" style="left:633.5px;top:1123.3px;font-size:27.6px;color:#1f2329;-webkit-text-stroke:0.3px #1f2329;letter-spacing:0.14px;">Capacitación Rol Analista</span>
<span class="t" style="left:1214.9px;top:1123.3px;font-size:27.6px;color:#1f2329;-webkit-text-stroke:0.3px #1f2329;letter-spacing:0.04px;">7 Días después</span>
<span class="t" style="left:1453.8px;top:1104.4px;font-size:27.6px;color:#1f2329;-webkit-text-stroke:0.3px #1f2329;letter-spacing:0.77px;">Nuevo</span>
<span class="t" style="left:1454.6px;top:1143.1px;font-size:27.6px;color:#1f2329;-webkit-text-stroke:0.3px #1f2329;letter-spacing:0.29px;">Colaborador</span>
<span class="t" style="left:2057.8px;top:1104.4px;font-size:27.6px;color:#1f2329;-webkit-text-stroke:0.3px #1f2329;letter-spacing:-0.51px;">María Jesús</span>
<span class="t" style="left:2057.8px;top:1143.1px;font-size:27.6px;color:#1f2329;-webkit-text-stroke:0.3px #1f2329;letter-spacing:0.52px;">Navarro</span>
<div class="bdg" style="left:1723.4px;top:1114.4px;width:80.5px;height:48px;background:#fdcfc2"></div>
<span class="t" style="left:1741.8px;top:1126.5px;font-size:24.2px;color:#b3202a;-webkit-text-stroke:0.7px #b3202a;letter-spacing:0.73px;">Alta</span>
<div class="bdg" style="left:2334px;top:1114.4px;width:114.8px;height:48px;background:#dae1fa"></div>
<span class="t" style="left:2350.5px;top:1126.5px;font-size:24.2px;color:#2f4daa;-webkit-text-stroke:0.7px #2f4daa;letter-spacing:0.15px;">Pública</span>
<svg style="position:absolute;left:2689.0px;top:1126.2px;overflow:visible;" width="35.0" height="24.0" viewBox="0 0 35 24" fill="none"><path d="M1.500 12C5 5 11 1.500 17.500 1.500S30 5 33.500 12C30 19 24 22.500 17.500 22.500S5 19 1.500 12z" stroke="#bfc2c8" stroke-width="2.400" stroke-linejoin="round"/><circle cx="17.500" cy="12" r="5.600" stroke="#bfc2c8" stroke-width="2.400"/><path d="M5 -2L30 26" stroke="#fafbfd" stroke-width="6"/><path d="M4.500 -1.500L29.500 26.500" stroke="#bfc2c8" stroke-width="2.400" stroke-linecap="round"/></svg>
<svg style="position:absolute;left:2760.0px;top:1122.9px;" width="32.0" height="31.0" viewBox="0 0 32 31" fill="none"><g transform="rotate(-45 16 15.500)"><rect x="0.800" y="12.600" width="30.400" height="5.800" rx="1.300" stroke="#2f4daa" stroke-width="2.300"/><path d="M24.500 12.600h5.400a1.300 1.300 0 011.300 1.300v3.200a1.300 1.300 0 01-1.300 1.300h-5.400z" fill="#2f4daa" stroke="#2f4daa" stroke-width="2.300"/></g></svg>
<svg style="position:absolute;left:2830.5px;top:1123.1px;" width="26.0" height="30.0" viewBox="0 0 26 30" fill="none"><path d="M1.200 4.600h23.600" stroke="#fa8072" stroke-width="2.800" stroke-linecap="round"/><path d="M9.500 3.500V2.200h7v1.300" stroke="#fa8072" stroke-width="2.400" stroke-linejoin="round"/><path d="M3.300 5.500v20.700a2.300 2.300 0 002.300 2.300h14.800a2.300 2.300 0 002.300-2.300V5.500" stroke="#fa8072" stroke-width="2.500"/><path d="M10 10.500v12.500M16.200 10.500v12.500" stroke="#fa8072" stroke-width="2.400"/></svg>
<div class="line" style="left:618px;top:1193.5px;width:2276px"></div>
<span class="t" style="left:633.5px;top:1235.8px;font-size:27.6px;color:#1f2329;-webkit-text-stroke:0.3px #1f2329;letter-spacing:0.12px;">Completar curso &quot;Valores de la empresa&quot;</span>
<span class="t" style="left:1214.2px;top:1216.9px;font-size:27.6px;color:#1f2329;-webkit-text-stroke:0.3px #1f2329;letter-spacing:0.44px;">10 Días</span>
<span class="t" style="left:1215.2px;top:1255.6px;font-size:27.6px;color:#1f2329;-webkit-text-stroke:0.3px #1f2329;letter-spacing:0.18px;">después</span>
<span class="t" style="left:1453.8px;top:1216.9px;font-size:27.6px;color:#1f2329;-webkit-text-stroke:0.3px #1f2329;letter-spacing:0.77px;">Nuevo</span>
<span class="t" style="left:1454.6px;top:1255.6px;font-size:27.6px;color:#1f2329;-webkit-text-stroke:0.3px #1f2329;letter-spacing:0.29px;">Colaborador</span>
<span class="t" style="left:2057.8px;top:1235.8px;font-size:27.6px;color:#1f2329;-webkit-text-stroke:0.3px #1f2329;letter-spacing:0.11px;">Nicole Sanchez</span>
<div class="bdg" style="left:1723.4px;top:1226.9px;width:80.5px;height:48px;background:#fdcfc2"></div>
<span class="t" style="left:1741.8px;top:1239.0px;font-size:24.2px;color:#b3202a;-webkit-text-stroke:0.7px #b3202a;letter-spacing:0.73px;">Alta</span>
<div class="bdg" style="left:2334px;top:1226.9px;width:117.6px;height:48px;background:#e4e5e7"></div>
<span class="t" style="left:2350.5px;top:1239.0px;font-size:24.2px;color:#5f6267;-webkit-text-stroke:0.7px #5f6267;letter-spacing:0.24px;">Privada</span>
<svg style="position:absolute;left:2690.5px;top:1237.9px;overflow:visible;" width="35.0" height="24.0" viewBox="0 0 35 24" fill="none"><path d="M1.500 12C5 5 11 1.500 17.500 1.500S30 5 33.500 12C30 19 24 22.500 17.500 22.500S5 19 1.500 12z" stroke="#2f4daa" stroke-width="2.400" stroke-linejoin="round"/><circle cx="17.500" cy="12" r="5.600" stroke="#2f4daa" stroke-width="2.400"/></svg>
<svg style="position:absolute;left:2760.0px;top:1235.4px;" width="32.0" height="31.0" viewBox="0 0 32 31" fill="none"><g transform="rotate(-45 16 15.500)"><rect x="0.800" y="12.600" width="30.400" height="5.800" rx="1.300" stroke="#2f4daa" stroke-width="2.300"/><path d="M24.500 12.600h5.400a1.300 1.300 0 011.300 1.300v3.200a1.300 1.300 0 01-1.300 1.300h-5.400z" fill="#2f4daa" stroke="#2f4daa" stroke-width="2.300"/></g></svg>
<svg style="position:absolute;left:2830.5px;top:1235.6px;" width="26.0" height="30.0" viewBox="0 0 26 30" fill="none"><path d="M1.200 4.600h23.600" stroke="#fa8072" stroke-width="2.800" stroke-linecap="round"/><path d="M9.500 3.500V2.200h7v1.300" stroke="#fa8072" stroke-width="2.400" stroke-linejoin="round"/><path d="M3.300 5.500v20.700a2.300 2.300 0 002.300 2.300h14.800a2.300 2.300 0 002.300-2.300V5.500" stroke="#fa8072" stroke-width="2.500"/><path d="M10 10.500v12.500M16.200 10.500v12.500" stroke="#fa8072" stroke-width="2.400"/></svg>
<div class="line" style="left:618px;top:1306.0px;width:2276px"></div>
<span class="t" style="left:633.5px;top:1348.3px;font-size:27.6px;color:#1f2329;-webkit-text-stroke:0.3px #1f2329;letter-spacing:0.12px;">Completar curso &quot;Valores de la empresa&quot;</span>
<span class="t" style="left:1214.2px;top:1329.4px;font-size:27.6px;color:#1f2329;-webkit-text-stroke:0.3px #1f2329;letter-spacing:0.44px;">10 Días</span>
<span class="t" style="left:1215.2px;top:1368.1px;font-size:27.6px;color:#1f2329;-webkit-text-stroke:0.3px #1f2329;letter-spacing:0.18px;">después</span>
<span class="t" style="left:1454.8px;top:1348.3px;font-size:27.6px;color:#1f2329;-webkit-text-stroke:0.3px #1f2329;letter-spacing:0.44px;">Supervisor</span>
<span class="t" style="left:2057.8px;top:1348.3px;font-size:27.6px;color:#1f2329;-webkit-text-stroke:0.3px #1f2329;letter-spacing:0.11px;">Nicole Sanchez</span>
<div class="bdg" style="left:1723.4px;top:1339.4px;width:80.5px;height:48px;background:#fdcfc2"></div>
<span class="t" style="left:1741.8px;top:1351.5px;font-size:24.2px;color:#b3202a;-webkit-text-stroke:0.7px #b3202a;letter-spacing:0.73px;">Alta</span>
<div class="bdg" style="left:2334px;top:1339.4px;width:117.6px;height:48px;background:#e4e5e7"></div>
<span class="t" style="left:2350.5px;top:1351.5px;font-size:24.2px;color:#5f6267;-webkit-text-stroke:0.7px #5f6267;letter-spacing:0.24px;">Privada</span>
<svg style="position:absolute;left:2690.5px;top:1350.4px;overflow:visible;" width="35.0" height="24.0" viewBox="0 0 35 24" fill="none"><path d="M1.500 12C5 5 11 1.500 17.500 1.500S30 5 33.500 12C30 19 24 22.500 17.500 22.500S5 19 1.500 12z" stroke="#2f4daa" stroke-width="2.400" stroke-linejoin="round"/><circle cx="17.500" cy="12" r="5.600" stroke="#2f4daa" stroke-width="2.400"/></svg>
<svg style="position:absolute;left:2760.0px;top:1347.9px;" width="32.0" height="31.0" viewBox="0 0 32 31" fill="none"><g transform="rotate(-45 16 15.500)"><rect x="0.800" y="12.600" width="30.400" height="5.800" rx="1.300" stroke="#2f4daa" stroke-width="2.300"/><path d="M24.500 12.600h5.400a1.300 1.300 0 011.300 1.300v3.200a1.300 1.300 0 01-1.300 1.300h-5.400z" fill="#2f4daa" stroke="#2f4daa" stroke-width="2.300"/></g></svg>
<svg style="position:absolute;left:2830.5px;top:1348.1px;" width="26.0" height="30.0" viewBox="0 0 26 30" fill="none"><path d="M1.200 4.600h23.600" stroke="#fa8072" stroke-width="2.800" stroke-linecap="round"/><path d="M9.500 3.500V2.200h7v1.300" stroke="#fa8072" stroke-width="2.400" stroke-linejoin="round"/><path d="M3.300 5.500v20.700a2.300 2.300 0 002.300 2.300h14.800a2.300 2.300 0 002.300-2.300V5.500" stroke="#fa8072" stroke-width="2.500"/><path d="M10 10.500v12.500M16.200 10.500v12.500" stroke="#fa8072" stroke-width="2.400"/></svg>
<div class="line" style="left:618px;top:1418.5px;width:2276px"></div>
<span class="t" style="left:633.5px;top:1460.8px;font-size:27.6px;color:#1f2329;-webkit-text-stroke:0.3px #1f2329;letter-spacing:-0.03px;">Conociendo la Cultura de la Empresa</span>
<span class="t" style="left:1215.7px;top:1460.8px;font-size:27.6px;color:#1f2329;-webkit-text-stroke:0.3px #1f2329;letter-spacing:-0.02px;">4 Días después</span>
<span class="t" style="left:1453.8px;top:1441.9px;font-size:27.6px;color:#1f2329;-webkit-text-stroke:0.3px #1f2329;letter-spacing:0.77px;">Nuevo</span>
<span class="t" style="left:1454.6px;top:1480.6px;font-size:27.6px;color:#1f2329;-webkit-text-stroke:0.3px #1f2329;letter-spacing:0.29px;">Colaborador</span>
<span class="t" style="left:2057.8px;top:1441.9px;font-size:27.6px;color:#1f2329;-webkit-text-stroke:0.3px #1f2329;letter-spacing:-0.51px;">María Jesús</span>
<span class="t" style="left:2057.8px;top:1480.6px;font-size:27.6px;color:#1f2329;-webkit-text-stroke:0.3px #1f2329;letter-spacing:0.52px;">Navarro</span>
<div class="bdg" style="left:1723.4px;top:1451.9px;width:80.5px;height:48px;background:#fdcfc2"></div>
<span class="t" style="left:1741.8px;top:1464.0px;font-size:24.2px;color:#b3202a;-webkit-text-stroke:0.7px #b3202a;letter-spacing:0.73px;">Alta</span>
<div class="bdg" style="left:2334px;top:1451.9px;width:117.6px;height:48px;background:#e4e5e7"></div>
<span class="t" style="left:2350.5px;top:1464.0px;font-size:24.2px;color:#5f6267;-webkit-text-stroke:0.7px #5f6267;letter-spacing:0.24px;">Privada</span>
<svg style="position:absolute;left:2690.5px;top:1462.9px;overflow:visible;" width="35.0" height="24.0" viewBox="0 0 35 24" fill="none"><path d="M1.500 12C5 5 11 1.500 17.500 1.500S30 5 33.500 12C30 19 24 22.500 17.500 22.500S5 19 1.500 12z" stroke="#2f4daa" stroke-width="2.400" stroke-linejoin="round"/><circle cx="17.500" cy="12" r="5.600" stroke="#2f4daa" stroke-width="2.400"/></svg>
<svg style="position:absolute;left:2760.0px;top:1460.4px;" width="32.0" height="31.0" viewBox="0 0 32 31" fill="none"><g transform="rotate(-45 16 15.500)"><rect x="0.800" y="12.600" width="30.400" height="5.800" rx="1.300" stroke="#2f4daa" stroke-width="2.300"/><path d="M24.500 12.600h5.400a1.300 1.300 0 011.300 1.300v3.200a1.300 1.300 0 01-1.300 1.300h-5.400z" fill="#2f4daa" stroke="#2f4daa" stroke-width="2.300"/></g></svg>
<svg style="position:absolute;left:2830.5px;top:1460.6px;" width="26.0" height="30.0" viewBox="0 0 26 30" fill="none"><path d="M1.200 4.600h23.600" stroke="#fa8072" stroke-width="2.800" stroke-linecap="round"/><path d="M9.500 3.500V2.200h7v1.300" stroke="#fa8072" stroke-width="2.400" stroke-linejoin="round"/><path d="M3.300 5.500v20.700a2.300 2.300 0 002.300 2.300h14.800a2.300 2.300 0 002.300-2.300V5.500" stroke="#fa8072" stroke-width="2.500"/><path d="M10 10.500v12.500M16.200 10.500v12.500" stroke="#fa8072" stroke-width="2.400"/></svg>
<div class="line" style="left:618px;top:1531.0px;width:2276px"></div>
<span class="t" style="left:2057.8px;top:1554.4px;font-size:27.6px;color:#1f2329;-webkit-text-stroke:0.3px #1f2329;letter-spacing:-0.51px;">María Jesús</span>
<span class="t" style="left:2057.8px;top:1593.1px;font-size:27.6px;color:#1f2329;-webkit-text-stroke:0.3px #1f2329;letter-spacing:0.52px;">Navarro</span>
<div class="bdg" style="left:1723.4px;top:1564.4px;width:80.5px;height:48px;background:#fdcfc2"></div>
<span class="t" style="left:1741.8px;top:1576.5px;font-size:24.2px;color:#b3202a;-webkit-text-stroke:0.7px #b3202a;letter-spacing:0.73px;">Alta</span>
<div class="bdg" style="left:2334px;top:1564.4px;width:117.6px;height:48px;background:#e4e5e7"></div>
<span class="t" style="left:2350.5px;top:1576.5px;font-size:24.2px;color:#5f6267;-webkit-text-stroke:0.7px #5f6267;letter-spacing:0.24px;">Privada</span>
<svg style="position:absolute;left:2690.5px;top:1575.4px;overflow:visible;" width="35.0" height="24.0" viewBox="0 0 35 24" fill="none"><path d="M1.500 12C5 5 11 1.500 17.500 1.500S30 5 33.500 12C30 19 24 22.500 17.500 22.500S5 19 1.500 12z" stroke="#2f4daa" stroke-width="2.400" stroke-linejoin="round"/><circle cx="17.500" cy="12" r="5.600" stroke="#2f4daa" stroke-width="2.400"/></svg>
<svg style="position:absolute;left:2760.0px;top:1572.9px;" width="32.0" height="31.0" viewBox="0 0 32 31" fill="none"><g transform="rotate(-45 16 15.500)"><rect x="0.800" y="12.600" width="30.400" height="5.800" rx="1.300" stroke="#2f4daa" stroke-width="2.300"/><path d="M24.500 12.600h5.400a1.300 1.300 0 011.300 1.300v3.200a1.300 1.300 0 01-1.300 1.300h-5.400z" fill="#2f4daa" stroke="#2f4daa" stroke-width="2.300"/></g></svg>
<svg style="position:absolute;left:2830.5px;top:1573.1px;" width="26.0" height="30.0" viewBox="0 0 26 30" fill="none"><path d="M1.200 4.600h23.600" stroke="#fa8072" stroke-width="2.800" stroke-linecap="round"/><path d="M9.500 3.500V2.200h7v1.300" stroke="#fa8072" stroke-width="2.400" stroke-linejoin="round"/><path d="M3.300 5.500v20.700a2.300 2.300 0 002.300 2.300h14.800a2.300 2.300 0 002.300-2.300V5.500" stroke="#fa8072" stroke-width="2.500"/><path d="M10 10.500v12.500M16.200 10.500v12.500" stroke="#fa8072" stroke-width="2.400"/></svg>
<svg style="position:absolute;left:2560.0px;top:540.0px;" width="90.0" height="75.0" viewBox="0 0 90 75" fill="none"><path d="M12.500 61.500L52 27.500" stroke="#fe0000" stroke-width="6.500" stroke-linecap="round"/><path d="M71.500 10.500L37.500 23.500 53 41z" fill="#fe0000"/></svg>
</div></body></html>
